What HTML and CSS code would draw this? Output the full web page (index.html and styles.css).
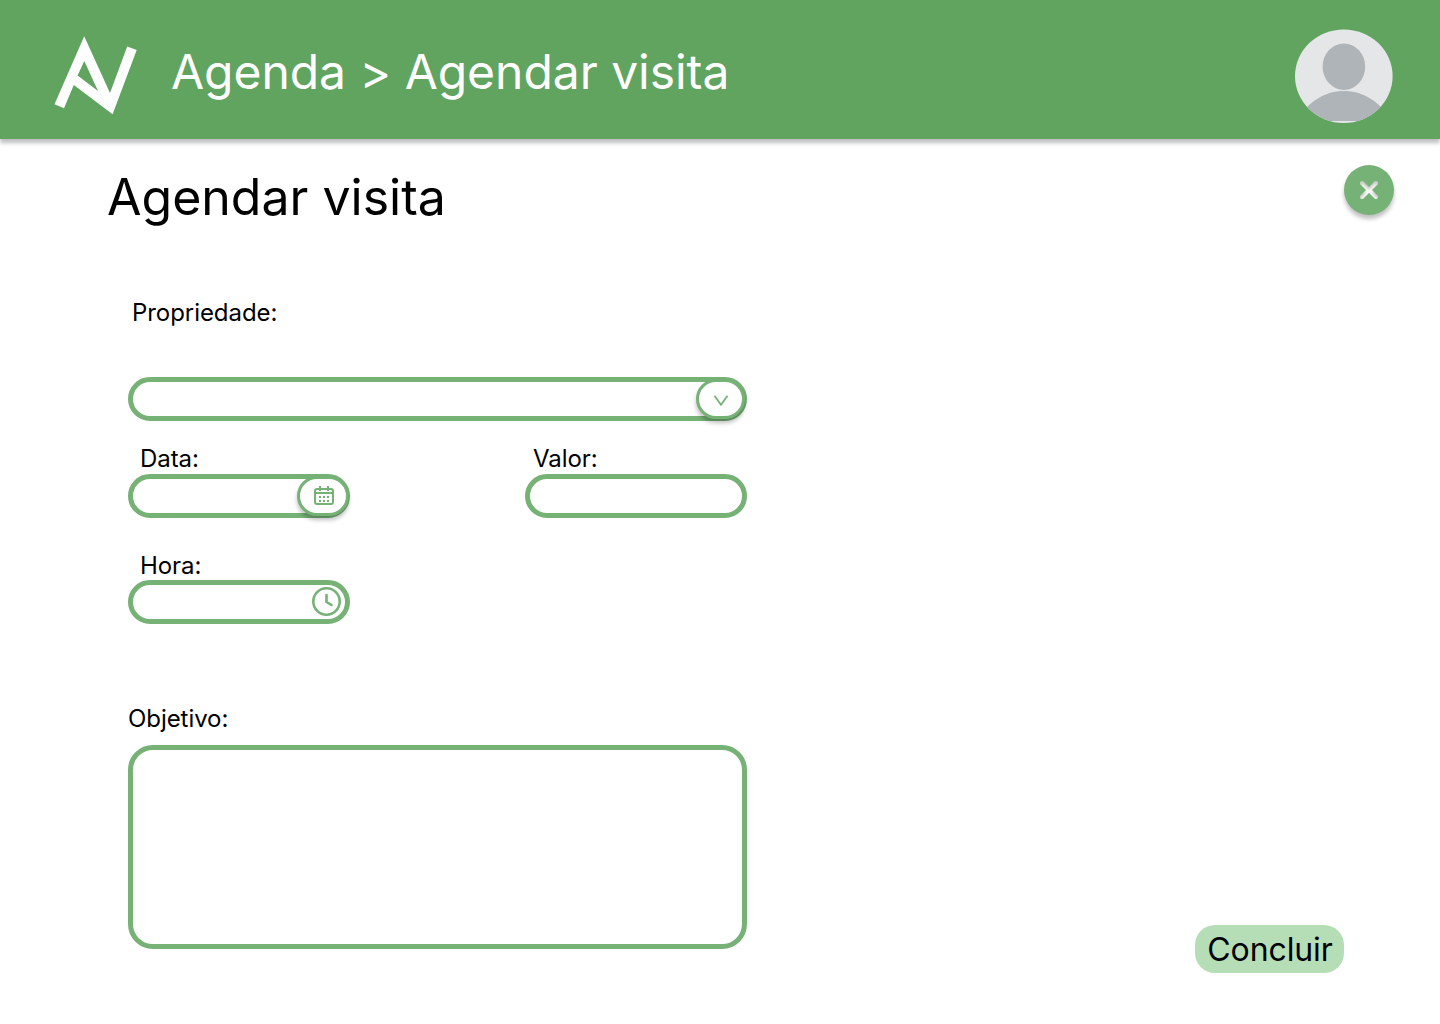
FILE: index.html
```html
<!DOCTYPE html>
<html lang="pt-BR">
<head>
<meta charset="utf-8">
<title>Agendar visita</title>
<link rel="stylesheet" href="styles.css">
</head>
<body>
<header class="topbar">
  <svg class="logo" width="84" height="80" viewBox="54 36 84 80"><path fill="#fff" fill-rule="evenodd" d="M84.2 36.3 110 93 127.2 46.5 136.7 50 112.6 114.2 73.8 85 64 108.3 54.5 104.2ZM84.3 61 77.6 75.4 98 91Z"/></svg>
  <div class="breadcrumb">Agenda &gt; Agendar visita</div>
  <svg class="avatar" width="98" height="94" viewBox="0 0 98 94">
    <defs><clipPath id="disc"><ellipse cx="48.8" cy="47.2" rx="48.8" ry="46.8"/></clipPath></defs>
    <g clip-path="url(#disc)">
      <rect width="98" height="94" fill="#e4e6e7"/>
      <ellipse cx="48.9" cy="37.7" rx="21.3" ry="23.2" fill="#aeb4b7"/>
      <path d="M2 92V91C14 72 30 62 49 62S84 72 96 91V92Z" fill="#aeb4b7"/>
    </g>
  </svg>
</header>
<main class="page">
  <div class="heading">
    <h1 class="title">Agendar visita</h1>
    <button class="close" aria-label="Fechar">
      <svg width="20" height="20" viewBox="0 0 20 20">
        <defs><filter id="inset" x="-20%" y="-20%" width="140%" height="140%" color-interpolation-filters="sRGB">
          <feOffset in="SourceAlpha" dy="3"/>
          <feGaussianBlur stdDeviation="1.6" result="shade"/>
          <feComposite in="SourceAlpha" in2="shade" operator="arithmetic" k2="1" k3="-1"/>
          <feColorMatrix values="0 0 0 0 0  0 0 0 0 0  0 0 0 0 0  0 0 0 .22 0"/>
          <feBlend in2="SourceGraphic"/>
        </filter></defs>
        <path d="M3 3 17 17M17 3 3 17" stroke="#fff" stroke-width="4" stroke-linecap="round" filter="url(#inset)"/>
      </svg>
    </button>
  </div>
  <div class="content">
    <form class="form">
      <div class="label label-property">Propriedade:</div>
      <div class="field"><span class="pill pill-select">
        <svg width="16" height="12" viewBox="0 0 16 12"><path d="M1.5 1.7 8 10.8 14.5 1.7" fill="none" stroke="#76b276" stroke-width="1.8"/></svg>
      </span></div>
      <div class="row">
        <div class="group">
          <div class="label label-inset">Data:</div>
          <div class="field"><span class="pill pill-date">
            <svg width="20" height="20" viewBox="0 0 20 20" fill="none" stroke="#76b276" stroke-width="2"><rect x="1" y="3" width="18" height="15" rx="2"/><path d="M1 7H19M6 0V5M14 0V5"/><path d="M5 11H7M9 11H11M13 11H15M5 15H7M9 15H11M13 15H15"/></svg>
          </span></div>
        </div>
        <div class="group">
          <div class="label label-value">Valor:</div>
          <div class="field"></div>
        </div>
      </div>
      <div class="group group-time">
        <div class="label label-inset">Hora:</div>
        <div class="field">
          <svg class="clock" width="30" height="30" viewBox="0 0 30 30" fill="none" stroke="#76b276" stroke-width="2.6"><circle cx="14.5" cy="14.5" r="13.2"/><path d="M14.5 8V15L19.5 18" stroke-linecap="round" stroke-linejoin="round"/></svg>
        </div>
      </div>
      <div class="label label-goal">Objetivo:</div>
      <div class="field field-area"></div>
    </form>
    <button class="submit">Concluir</button>
  </div>
</main>
</body>
</html>
```
FILE: styles.css
```css
* { box-sizing: border-box; }
body { margin: 0; min-height: 1024px; background: #fff; color: #000; font-family: Inter, sans-serif; }
button { border: 0; padding: 0; font: inherit; color: inherit; }
svg { display: block; flex: none; }

.topbar {
  height: 139px;
  padding: 0 47px 0 54px;
  display: flex;
  background: #60a45f;
  box-shadow: 0 4px 4px rgba(0, 0, 0, .25);
}
.logo { margin-top: 36px; }
.breadcrumb { margin: 42px auto 0 33px; font-size: 48px; line-height: 60px; letter-spacing: -.04px; color: #fff; white-space: nowrap; }
.avatar { margin-top: 29px; }

.page { padding: 26px 46px 51px 107px; }
.heading { display: flex; justify-content: space-between; align-items: flex-start; height: 132px; }
.title { margin: 2px 0 0; font-size: 50px; line-height: 60px; font-weight: 400; }
.close {
  width: 50px;
  height: 50px;
  border-radius: 50%;
  background: #76b276;
  display: flex;
  align-items: center;
  justify-content: center;
  box-shadow: 0 4px 4px rgba(0, 0, 0, .25);
}

.content { display: flex; justify-content: space-between; align-items: flex-end; padding: 0 50px 0 21px; }
.form { width: 619px; padding: 1px 0 24px; }
.label { font-size: 24px; line-height: 30px; letter-spacing: -.06px; }
.label-property { padding-left: 4px; margin-bottom: 49px; }
.label-inset { padding-left: 12px; }
.label-value { padding-left: 8px; }
.label-goal { margin: 80px 0 11px; }
.row { display: flex; justify-content: space-between; margin-top: 23px; }
.group { width: 222px; }
.group-time { margin-top: 33px; }
.group-time .label { margin-bottom: -1px; }
.field {
  height: 44px;
  border: 5px solid #76b276;
  border-radius: 22px;
  display: flex;
  align-items: center;
  justify-content: flex-end;
}
.field-area { height: 204px; border-radius: 25px; }
.pill {
  height: 40px;
  margin-right: -3px;
  border: 3px solid #76b276;
  border-radius: 20px;
  background: #fff;
  display: flex;
  flex: none;
  align-items: center;
  justify-content: center;
  box-shadow: 0 4px 4px rgba(0, 0, 0, .25);
}
.pill-select { width: 49px; padding-top: 1px; }
.pill-date { width: 52px; margin-right: -4px; padding-left: 2px; }
.clock { margin-right: 3px; }

.submit {
  width: 149px;
  height: 48px;
  padding: 1px 0 0 1px;
  border-radius: 20px;
  background: #b6deb6;
  font-size: 32px;
  line-height: 47px;
  letter-spacing: -.1px;
}
```
